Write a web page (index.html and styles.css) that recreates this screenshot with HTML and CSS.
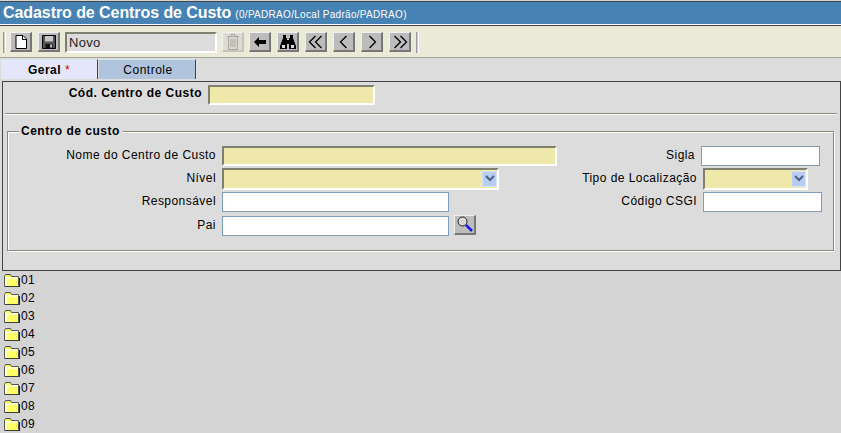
FILE: index.html

```html
<!DOCTYPE html>
<html lang="pt-BR">
<head>
  <meta charset="UTF-8">
  <title>Cadastro de Centros de Custo</title>
  <link rel="stylesheet" href="styles.css">
</head>
<body>
  <div class="title-bar">
    <span class="title">Cadastro de Centros de Custo</span>
    <span class="title-path">(0/PADRAO/Local Padrão/PADRAO)</span>
  </div>

  <div class="toolbar">
    <span class="grip"></span>
    <button class="tool">
      <svg width="16" height="16" viewBox="0 0 16 16"><path d="M3 1.500h7l3.500 3.500v9.500h-10.500z" fill="#fff" stroke="#000"/><path d="M9.500 1.500v4h4" fill="none" stroke="#000"/></svg>
    </button>
    <button class="tool">
      <svg width="16" height="16" viewBox="0 0 16 16"><path d="M1.500 1.500h13v13h-13z" fill="#555" stroke="#000"/><path d="M4 2h8v5.500h-8z" fill="#c8c8c8"/><path d="M4.500 10h7v4.500h-7z" fill="#111"/><path d="M9 10.500h2v3h-2z" fill="#bbb"/></svg>
    </button>
    <input class="status" type="text" value="Novo" readonly>
    <button class="tool tool-off">
      <svg width="16" height="18" viewBox="0 0 16 18" fill="none" stroke="#a9a99f"><path d="M2 3.500h12M6 3.500v-2h4v2" /><path d="M3.500 3.500h9v13h-9z" fill="#d8d8d0"/><path d="M6 6v8M8 6v8M10 6v8"/></svg>
    </button>
    <button class="tool">
      <svg width="12" height="10" viewBox="0 0 12 10"><path d="M0 5l5-5v3h7v4h-7v3z"/></svg>
    </button>
    <button class="tool">
      <svg width="18" height="16" viewBox="0 0 18 16"><path d="M4 1h3v3h1v2h2v-2h1v-3h3v3l3 8v3h-7v-5h-2v5h-7v-3l3-8z"/><path d="M3 11h3v3h-3zM12 11h3v3h-3z" fill="#ddd"/></svg>
    </button>
    <button class="tool">
      <svg width="16" height="14" viewBox="0 0 16 14" fill="none" stroke="#000" stroke-width="1.300"><path d="M7.500 1l-6 6 6 6M13.500 1l-6 6 6 6"/></svg>
    </button>
    <button class="tool">
      <svg width="16" height="14" viewBox="0 0 16 14" fill="none" stroke="#000" stroke-width="1.300"><path d="M10.500 1l-6 6 6 6"/></svg>
    </button>
    <button class="tool">
      <svg width="16" height="14" viewBox="0 0 16 14" fill="none" stroke="#000" stroke-width="1.300"><path d="M5.500 1l6 6-6 6"/></svg>
    </button>
    <button class="tool">
      <svg width="16" height="14" viewBox="0 0 16 14" fill="none" stroke="#000" stroke-width="1.300"><path d="M2.500 1l6 6-6 6M8.500 1l6 6-6 6"/></svg>
    </button>
    <span class="grip"></span>
  </div>

  <div class="tabs">
    <a class="tab tab-on"><b>Geral</b> <span class="star">*</span></a>
    <a class="tab tab-off">Controle</a>
  </div>

  <div class="panel">
    <div class="code-row">
      <label class="code-label">Cód. Centro de Custo</label>
      <input class="field required code-field" type="text">
    </div>
    <hr class="divider">

    <fieldset class="group">
      <legend>Centro de custo</legend>
      <div class="row row-first">
        <div class="left">
          <label class="left-label">Nome do Centro de Custo</label>
          <input class="field required name-field" type="text">
        </div>
        <label class="right-label sigla-label">Sigla</label>
        <input class="field plain sigla-field" type="text">
      </div>
      <div class="row">
        <div class="left">
          <label class="left-label">Nível</label>
          <div class="select nivel-select">
            <span class="select-arrow"><svg width="10" height="7" viewBox="0 0 10 7"><path d="M1 1l4 4 4-4" fill="none" stroke="#4d6185" stroke-width="2"/></svg></span>
          </div>
        </div>
        <label class="right-label">Tipo de Localização</label>
        <div class="select tipo-select">
          <span class="select-arrow"><svg width="10" height="7" viewBox="0 0 10 7"><path d="M1 1l4 4 4-4" fill="none" stroke="#4d6185" stroke-width="2"/></svg></span>
        </div>
      </div>
      <div class="row">
        <div class="left">
          <label class="left-label">Responsável</label>
          <input class="field plain short-field" type="text">
        </div>
        <label class="right-label">Código CSGI</label>
        <input class="field plain csgi-field" type="text">
      </div>
      <div class="row row-last">
        <div class="left">
          <label class="left-label">Pai</label>
          <input class="field plain short-field" type="text">
          <button class="tool lookup">
            <svg width="18" height="18" viewBox="0 0 18 18"><circle cx="6.500" cy="6.500" r="4.500" fill="#d8d8d8" stroke="#222"/><path d="M10 10l6 6" stroke="#1a1ae0" stroke-width="2.500"/></svg>
          </button>
        </div>
      </div>
    </fieldset>
  </div>

  <ul class="tree" id="tree"></ul>

  <script>
    // folder list below the form
    const codes = ["01", "02", "03", "04", "05", "06", "07", "08", "09"];
    const tree = document.getElementById("tree");
    codes.forEach(code => {
      const item = document.createElement("li");
      item.innerHTML = '<svg width="16" height="13" viewBox="0 0 16 13"><path d="M.5 2.500l1-2h5l1 2h7v10h-14z" fill="#ffff66" stroke="#555"/><path d="M1 3h13v2h-13zM1 5h2v7h-2z" fill="#ffffcc"/><path d="M15.500 4v9h-14" fill="none" stroke="#222"/></svg>' + code;
      tree.appendChild(item);
    });
  </script>
</body>
</html>
```

FILE: styles.css

```css
html, body { margin: 0; padding: 0; height: 433px; overflow: hidden; }
body { background-color: #d4d4d4; font-family: "Liberation Sans", Arial, sans-serif; font-size: 12px; color: #000; }

.title-bar { height: 22px; margin-top: 1px; border-top: 1px solid #444; border-bottom: 1px solid #fff; box-shadow: 0 1px 0 #444; background-color: #4682b4; color: #fff; padding-left: 3px; display: flex; align-items: baseline; gap: 4px; line-height: 22px; white-space: nowrap; }
.title { font-size: 16px; font-weight: bold; letter-spacing: -.07px; }
.title-path { font-size: 10px; letter-spacing: .3px; }

.toolbar { margin-top: 1px; height: 30px; padding-top: 1px; border-bottom: 1px solid #a8a498; background-color: #ebe9d8; display: flex; align-items: center; padding-left: 3px; }
.grip { width: 1px; height: 21px; border-left: 1px solid #999; border-right: 1px solid #fff; background-color: #ccc; }
.toolbar .grip:last-child { margin-left: -1px; }
.toolbar .grip:first-child { margin-right: 4px; }

.tool { width: 22px; height: 20px; padding: 0; margin-right: 6px; background-color: #bcbcbc; border-style: solid; border-width: 1px 2px 2px 1px; border-color: #f0f0f0 #777 #777 #f0f0f0; display: flex; align-items: center; justify-content: center; flex: none; }
.tool-off { margin-right: 5px; background-color: #dcdcd4; border-color: #f4f4f0 #c4c4bc #c4c4bc #f4f4f0; }
.status { width: 146px; height: 17px; padding: 0 0 0 2px; margin: 0 5px 0 -1px; border: 2px solid; border-color: #808070 #fff #fff #808070; background-color: #dcdcdc; font: 13px "Liberation Sans", Arial, sans-serif; letter-spacing: .3px; color: #222; }

.tabs { height: 23px; background-color: #dcdcdc; padding: 1px 0 0 1px; box-sizing: border-box; display: flex; gap: 1px; }
.tab { width: 97px; height: 20px; line-height: 20px; text-align: center; background-color: #b0c4de; border-right: 1px solid #444; border-top: 1px solid #d8e4f0; letter-spacing: .5px; box-sizing: border-box; }
.tab-on { background-color: #e6e6fa; }
.tab-off { padding-left: 2px; }
.star { color: #c00; }

.panel { height: 190px; box-sizing: border-box; background-color: #dcdcdc; border: 1px solid #444; margin-left: 2px; box-shadow: -2px 0 0 #dcdcdc; }

.code-row { display: flex; align-items: center; padding-top: 3px; }
.code-label { width: 199px; margin: 0 6px 4px 0; text-align: right; font-weight: bold; letter-spacing: .5px; white-space: nowrap; }

.field { box-sizing: border-box; height: 20px; padding: 0 2px; margin: 0; background-color: #fff; font: 12px "Liberation Sans", Arial, sans-serif; }
.required { border: 2px solid; border-color: #808070 #fff #fff #808070; background-color: #eee8aa; }
.plain { border: 1px solid #7f9db9; }
.code-field { width: 167px; }

.divider { margin: 8px 3px 0 2px; height: 0; border: 0; border-top: 1px solid #8a8a7a; border-bottom: 1px solid #fff; }

.group { margin: 9px 6px 0 4px; padding: 0; height: 127px; box-sizing: border-box; border: 1px solid #8a8a7a; box-shadow: 1px 1px 0 #fff, inset 1px 1px 0 #fff; }
.group legend { margin-left: 11px; padding: 0 2px; background-color: #dcdcdc; font-weight: bold; letter-spacing: .5px; }

.row { display: flex; align-items: center; height: 23px; }
.row-first { margin-top: 6px; }
.row-last { margin-top: 1px; }
.left { width: 553px; display: flex; align-items: center; flex: none; }
.left-label { width: 208px; margin: 0 6px 2px 0; text-align: right; letter-spacing: .45px; white-space: nowrap; flex: none; }
.right-label { width: 130px; margin: 0 6px 2px 6px; text-align: right; letter-spacing: .45px; white-space: nowrap; }
.right-label.sigla-label { margin-left: 4px; }

.name-field { width: 335px; }
.short-field { width: 227px; }
.sigla-field { width: 119px; }
.csgi-field { width: 119px; }

.select { box-sizing: border-box; height: 22px; display: flex; justify-content: flex-end; align-items: center; background-color: #eee8aa; border: 2px solid; border-color: #808070 #fff #fff #808070; }
.nivel-select { width: 277px; }
.tipo-select { width: 105px; }
.select-arrow { width: 15px; height: 16px; background-color: #b8ccf4; border: 1px solid #d8e4fb; box-sizing: border-box; display: flex; align-items: center; justify-content: center; }

.lookup { margin: 0 0 2px 5px; }

.tree { list-style: none; margin: 0 0 0 4px; padding: 0; }
.tree li { height: 18px; display: flex; align-items: center; gap: 1px; letter-spacing: .4px; }
```
